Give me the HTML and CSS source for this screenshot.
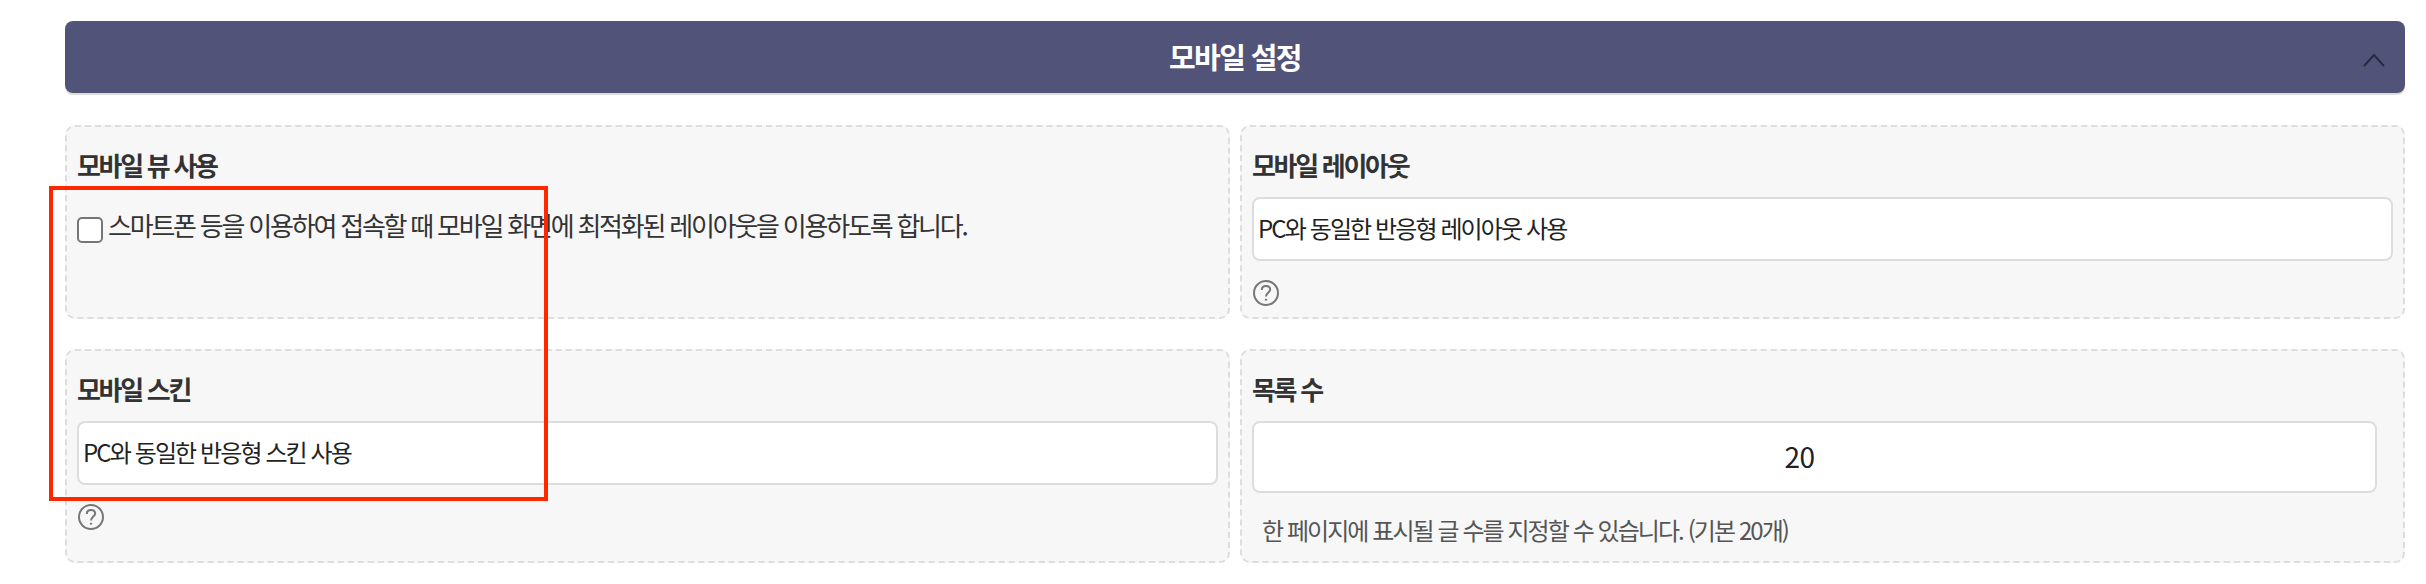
FILE: index.html
```html
<!DOCTYPE html>
<html lang="ko">

<head>
    <meta charset="utf-8">
    <title>모바일 설정</title>
    <link rel="stylesheet" href="styles.css">
</head>

<body>
    <section class="settings">
        <div class="settings-header">
            <h2>모바일 설정</h2>
            <svg class="chevron" viewBox="0 0 24 16" width="24" height="16">
                <path d="M2.5 13.5 L12 3 L21.5 13.5" />
            </svg>
        </div>

        <div class="settings-grid">
            <div class="panel">
                <h3>모바일 뷰 사용</h3>
                <label class="check-row">
                    <input type="checkbox">
                    <span class="check-text">스마트폰 등을 이용하여 접속할 때 모바일 화면에 최적화된 레이아웃을 이용하도록 합니다.</span>
                </label>
            </div>

            <div class="panel">
                <h3>모바일 레이아웃</h3>
                <div class="select">PC와 동일한 반응형 레이아웃 사용</div>
                <svg class="help" viewBox="0 0 28 28" width="28" height="28">
                    <circle cx="14" cy="14" r="12" />
                    <path d="M9.8 11 C9.8 8.3 11.6 6.9 14 6.9 C16.5 6.9 18.2 8.4 18.2 10.6 C18.2 13.4 14 13.8 14 17.6" />
                    <path class="dot" d="M14 19.8 V21.6" />
                </svg>
            </div>

            <div class="panel">
                <h3>모바일 스킨</h3>
                <div class="select">PC와 동일한 반응형 스킨 사용</div>
                <svg class="help" viewBox="0 0 28 28" width="28" height="28">
                    <circle cx="14" cy="14" r="12" />
                    <path d="M9.8 11 C9.8 8.3 11.6 6.9 14 6.9 C16.5 6.9 18.2 8.4 18.2 10.6 C18.2 13.4 14 13.8 14 17.6" />
                    <path class="dot" d="M14 19.8 V21.6" />
                </svg>
            </div>

            <div class="panel">
                <h3>목록 수</h3>
                <input class="count" type="text" value="20">
                <p class="hint">한 페이지에 표시될 글 수를 지정할 수 있습니다. (기본 20개)</p>
            </div>
        </div>

        <div class="highlight"></div>
    </section>
</body>

</html>
```

FILE: styles.css
```css
* {
    box-sizing: border-box;
}

body {
    margin: 0;
    background-color: #fff;
    color: #333;
    font-family: "Noto Sans CJK KR", sans-serif;
    letter-spacing: -1.9px;
}

.settings {
    position: relative;
    padding: 21px 21px 21px 65px;
}

.settings-header {
    display: grid;
    grid-template-columns: 1fr auto 1fr;
    align-items: center;
    height: 72px;
    padding: 0 19px;
    border-radius: 8px;
    background-color: #525378;
    box-shadow: 0 2px 0 #ddd;
}

.settings-header h2 {
    grid-column: 2;
    margin: 0;
    color: #fff;
    font-size: 29px;
    font-weight: 700;
    letter-spacing: -1.6px;
    line-height: 70px;
    height: 72px;
}

.chevron {
    justify-self: end;
    margin-top: 5px;
    fill: none;
    stroke: #2a2a3e;
    stroke-width: 2;
    stroke-linecap: round;
    stroke-linejoin: round;
}

.settings-grid {
    display: grid;
    grid-template-columns: 1fr 1fr;
    grid-template-rows: 194px 214px;
    gap: 30px 10px;
    margin-top: 32px;
}

.panel {
    padding: 19px 10px 0;
    border: 2px dashed #ddd;
    border-radius: 10px;
    background-color: #f7f7f7;
}

.panel h3 {
    margin: 0 0 13px;
    font-size: 26px;
    font-weight: 700;
    letter-spacing: -2.3px;
    line-height: 38px;
}

.check-row {
    display: flex;
    align-items: flex-start;
    padding-top: 9px;
}

.check-row input {
    appearance: none;
    width: 26px;
    height: 26px;
    margin: 11px 5px 0 0;
    border: 2px solid #767676;
    border-radius: 5px;
    background-color: #fff;
}

.check-text {
    font-size: 26px;
    letter-spacing: -2.22px;
    line-height: 38px;
}

.select {
    height: 64px;
    padding: 0 4px;
    border: 2px solid #ddd;
    border-radius: 8px;
    background-color: #fff;
    color: #222;
    font-size: 24px;
    line-height: 58px;
}

.help {
    display: block;
    margin-top: 18px;
    fill: none;
    stroke: #777;
    stroke-width: 2;
}

.help .dot {
    stroke-width: 2.2;
}

.count {
    display: block;
    width: 1125px;
    height: 72px;
    padding: 0 30px 2px 0;
    border: 2px solid #ddd;
    border-radius: 8px;
    background-color: #fff;
    color: #222;
    font-family: inherit;
    font-size: 28px;
    letter-spacing: -0.5px;
    text-align: center;
}

.hint {
    margin: 19px 0 0 10px;
    color: #555;
    font-size: 24px;
    letter-spacing: -1.94px;
    line-height: 36px;
}

.highlight {
    position: absolute;
    top: 186px;
    left: 49px;
    width: 499px;
    height: 315px;
    border: 4px solid #ff2600;
}
```
